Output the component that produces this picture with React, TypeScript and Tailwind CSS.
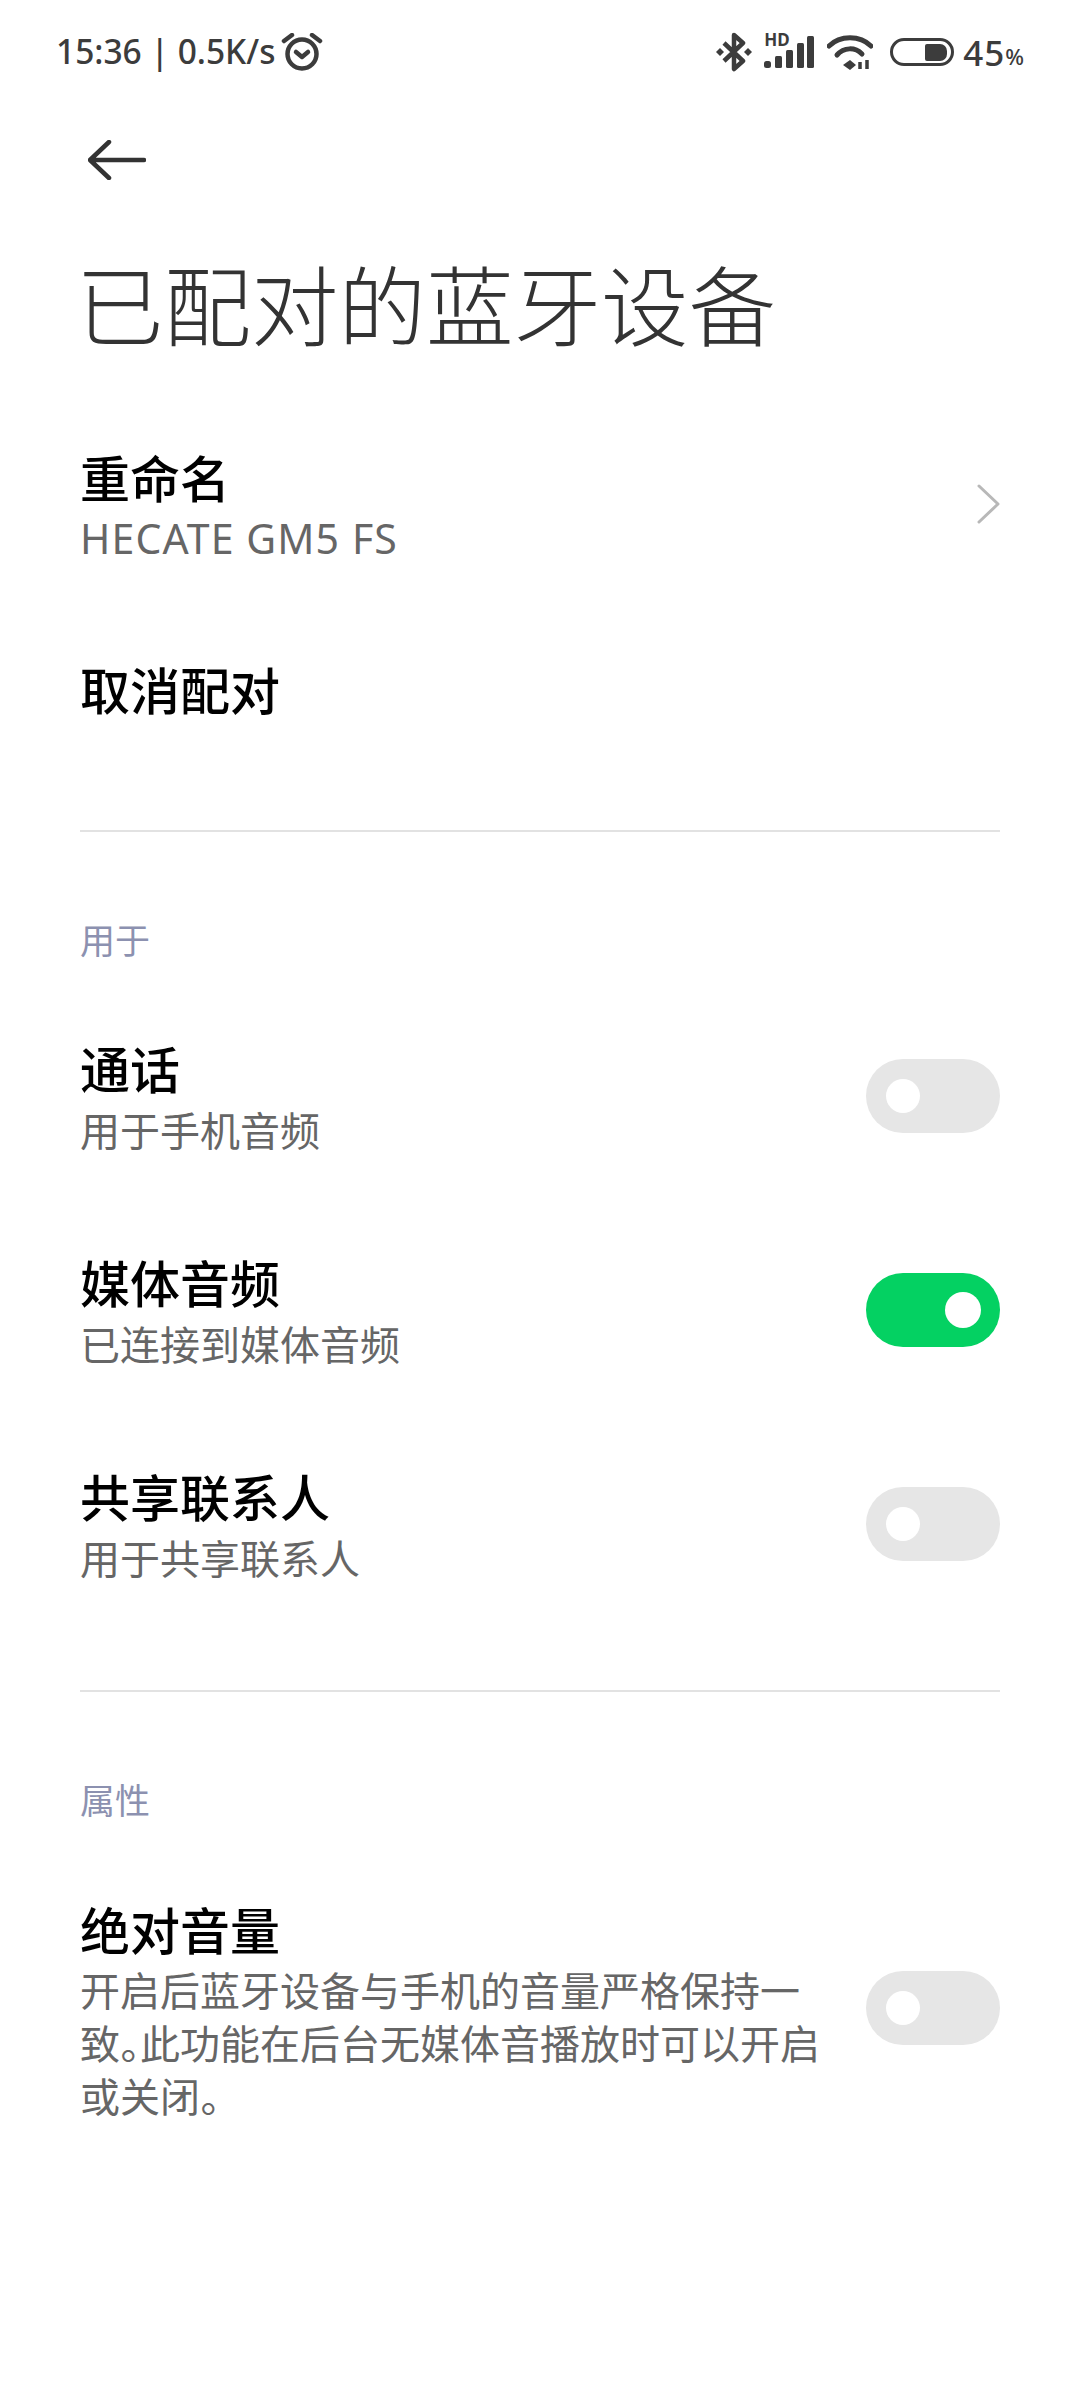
const sans = 'font-["Noto_Sans","Noto_Sans_CJK_SC",sans-serif]';

function Toggle({ on = false }: { on?: boolean }) {
  return (
    <div className={`w-[134px] h-[74px] shrink-0 rounded-full flex items-center ${on ? 'bg-[#04d162] justify-end pr-[19px]' : 'bg-[#e6e6e6] justify-start pl-[20px]'}`}>
      <div className={`rounded-full bg-white ${on ? 'w-[36px] h-[36px]' : 'w-[34px] h-[34px]'}`}></div>
    </div>
  );
}

function ToggleRow({ title, desc, on }: { title: string; desc: string; on?: boolean }) {
  return (
    <div className="flex items-center justify-between h-[214px]">
      <div className="mt-[6px]">
        <div className="text-[50px] leading-[60px] font-medium text-black">{title}</div>
        <div className="text-[40px] leading-[56px] text-[#666] mt-[3px]">{desc}</div>
      </div>
      <Toggle on={on} />
    </div>
  );
}

function StatusIcons() {
  return (
    <div className="flex items-center">
      <svg width="36" height="40" viewBox="0 0 36 40" className="text-[#3c3c3c] mr-[12px]" fill="none" stroke="currentColor" strokeWidth="4.5">
        <path d="M8 11 L27 29 L18 37 V3 L27 11 L8 29" strokeLinejoin="round" />
        <path d="M0 20 l4 -4 4 4 -4 4z M28 20 l4 -4 4 4 -4 4z" fill="currentColor" stroke="none" />
      </svg>
      <div className="relative w-[50px] h-[32px] mr-[13px]">
        <span className="absolute left-0 top-[-4px] text-[17px] leading-[16px] font-bold text-[#3c3c3c]">HD</span>
        <svg width="50" height="32" viewBox="0 0 50 32" fill="#3c3c3c">
          <rect x="0" y="25" width="7" height="7" rx="2.5" />
          <rect x="11" y="20" width="7" height="12" rx="1.5" />
          <rect x="22" y="14" width="7" height="18" rx="1.5" />
          <rect x="33" y="7" width="7" height="25" rx="1.5" />
          <rect x="43" y="0" width="7" height="32" rx="1.5" />
        </svg>
      </div>
      <svg width="46" height="36" viewBox="0 0 46 36" className="mr-[17px]" fill="none" stroke="#3c3c3c" strokeWidth="5">
        <path d="M2 12 C13 1 33 1 44 12" strokeLinecap="round" />
        <path d="M10 21 C17 13 28 13 35 20" strokeLinecap="round" />
        <path d="M16 31 l7 -5 6 5 -6 5z" fill="#3c3c3c" stroke="none" />
        <path d="M33 28 v7 M40 26 v9" strokeWidth="3.5" />
      </svg>
      <div className="w-[64px] h-[28px] rounded-full border-[3px] border-[#3c3c3c] flex items-center justify-end pr-[4px] mr-[9px]">
        <div className="w-[22px] h-[17px] bg-[#3c3c3c] rounded-r-[7px] rounded-l-[2px]"></div>
      </div>
      <span className="text-[35px] leading-none font-medium text-[#3c3c3c] tracking-[1px]">45</span>
      <span className="text-[22px] leading-none font-medium text-[#3c3c3c] mt-[8px]">%</span>
    </div>
  );
}

export default function App() {
  return (
    <div className={`w-[1080px] h-[2400px] bg-white overflow-hidden ${sans}`}>
      <div className="h-[104px] flex items-center justify-between pl-[56px] pr-[56px]">
        <div className="flex items-center text-[#3c3c3c]">
          <span className="text-[33.5px] leading-none font-medium">15:36 | 0.5K/s</span>
          <svg width="42" height="38" viewBox="0 0 42 38" className="ml-[6px]" fill="none" stroke="#3c3c3c" strokeWidth="4.5" strokeLinecap="round" strokeLinejoin="round">
            <circle cx="21" cy="21" r="14.5" />
            <path d="M15 19 l6 5 6 -5" />
            <path d="M3 8 L11 2 M31 2 L39 8" />
          </svg>
        </div>
        <StatusIcons />
      </div>

      <div className="pl-[88px] h-[76px] flex items-center mt-[18px]">
        <svg width="58" height="40" viewBox="0 0 58 40" fill="none" stroke="#333" strokeWidth="4.5" strokeLinecap="round" strokeLinejoin="round">
          <path d="M56 20 H3 M21 2 L2 20 L21 38" />
        </svg>
      </div>

      <div className="px-[80px]">
        <h1 className="text-[87.5px] leading-[110px] font-light text-[#333] mt-[53px] ml-[-4px]">已配对的蓝牙设备</h1>

        <div className="flex items-center justify-between mt-[88px]">
          <div>
            <div className="text-[50px] leading-[60px] font-medium text-black">重命名</div>
            <div className="text-[41px] leading-[58px] tracking-[1.1px] text-[#666]">HECATE GM5 FS</div>
          </div>
          <svg width="24" height="40" viewBox="0 0 24 40" fill="none" stroke="#b8b8b8" strokeWidth="3" strokeLinecap="round" strokeLinejoin="round" className="mt-[-8px]">
            <path d="M3 2 L22 20 L3 38" />
          </svg>
        </div>

        <div className="text-[50px] leading-[60px] font-medium text-black mt-[94px]">取消配对</div>
        <div className="border-t-[2px] border-[#e2e2e2] mt-[109px]"></div>

        <div className="text-[35px] leading-[44px] text-[#8c91b0] mt-[87px]">用于</div>
        <div className="mt-[26px]">
          <ToggleRow title="通话" desc="用于手机音频" />
          <ToggleRow title="媒体音频" desc="已连接到媒体音频" on />
          <ToggleRow title="共享联系人" desc="用于共享联系人" />
        </div>
        <div className="border-t-[2px] border-[#e2e2e2] mt-[59px]"></div>

        <div className="text-[35px] leading-[44px] text-[#8c91b0] mt-[87px]">属性</div>

        <div className="flex justify-between mt-[78px]">
          <div className="w-[770px]">
            <div className="text-[50px] leading-[60px] font-medium text-black">绝对音量</div>
            <div className='text-[40px] leading-[53px] text-[#666] mt-[3px] [font-feature-settings:"palt"]'>开启后蓝牙设备与手机的音量严格保持一致。此功能在后台无媒体音播放时可以开启或关闭。</div>
          </div>
          <div className="mt-[70px]">
            <Toggle />
          </div>
        </div>
      </div>
    </div>
  );
}
